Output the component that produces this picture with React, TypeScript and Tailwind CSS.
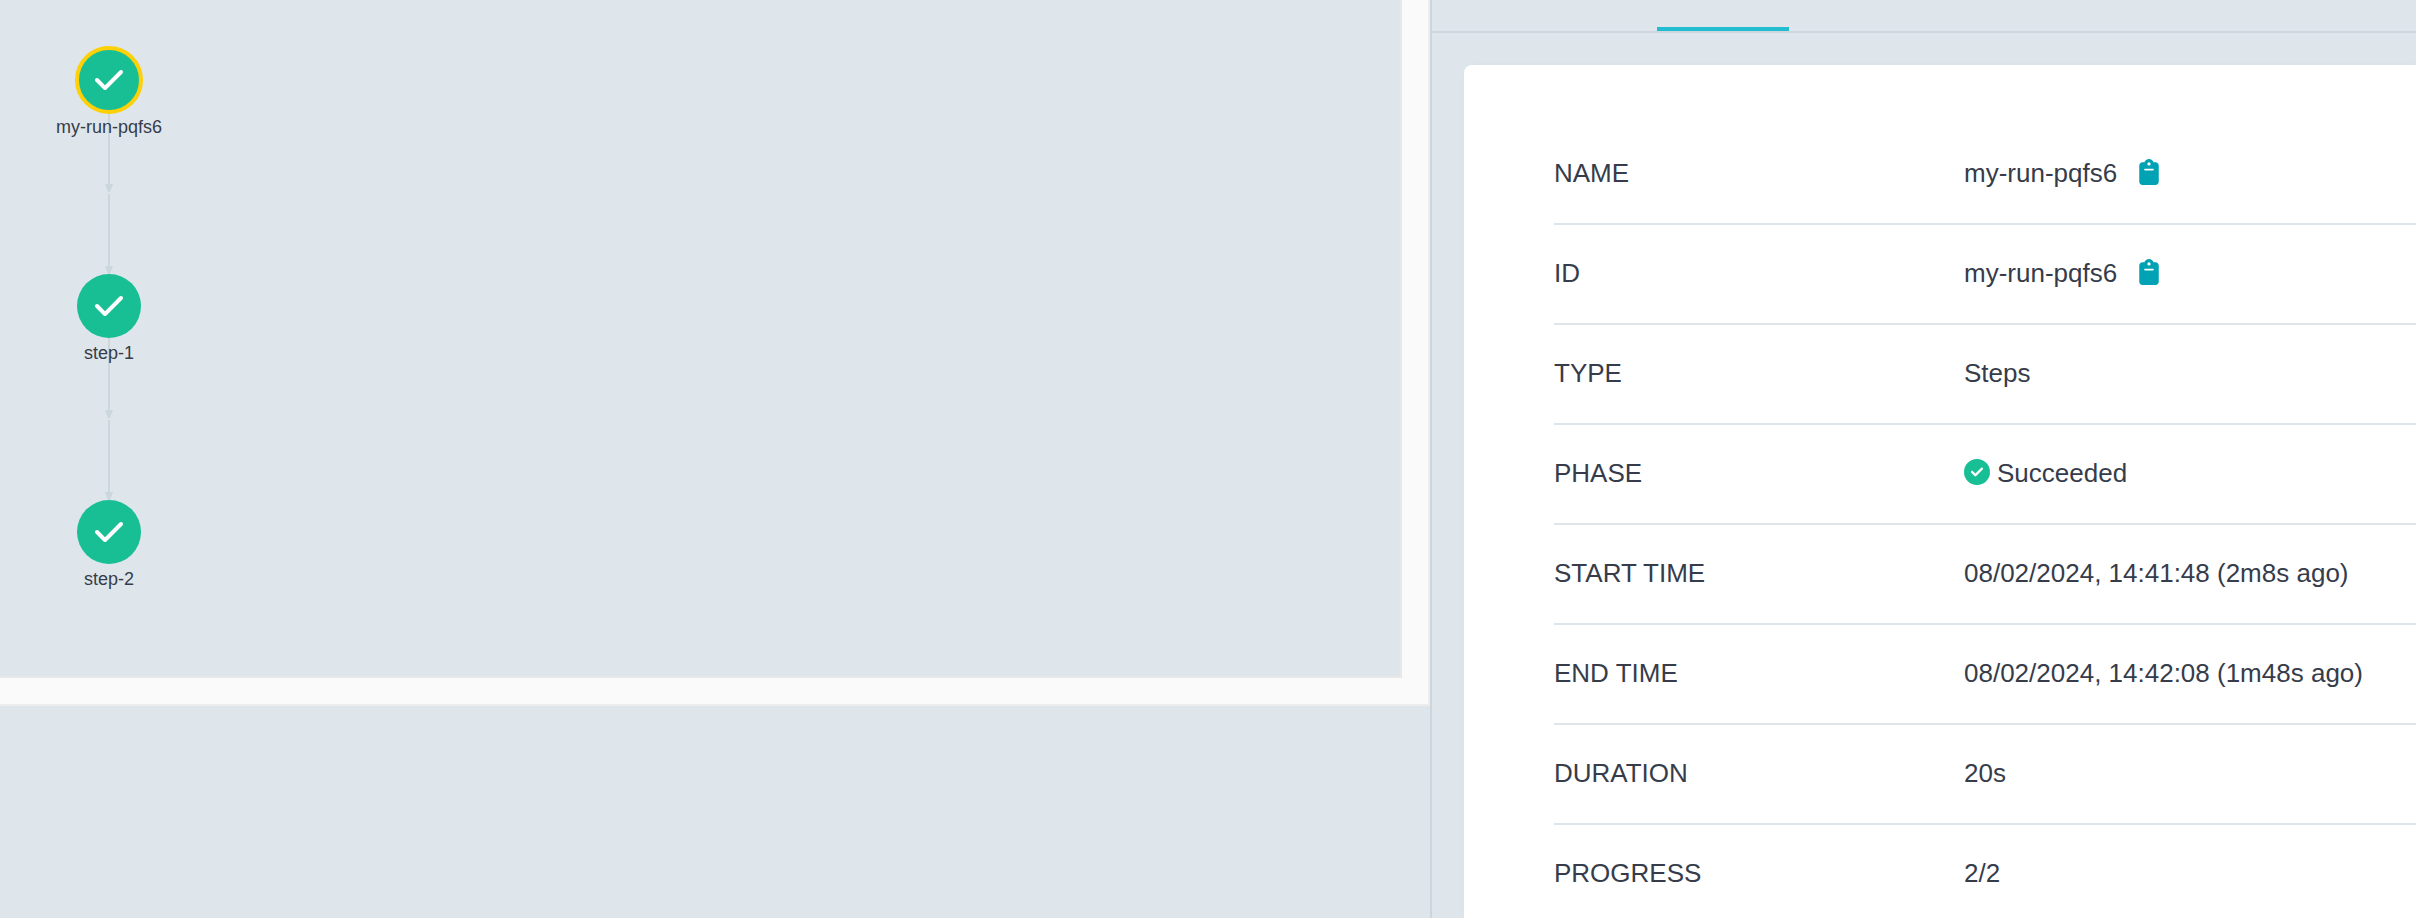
import React from "react";
import { FaCheck, FaCircleCheck, FaClipboard } from "react-icons/fa6";

type Row = { label: string; value: string; copy?: boolean; ok?: boolean };

const rows: Row[] = [
  { label: "NAME", value: "my-run-pqfs6", copy: true },
  { label: "ID", value: "my-run-pqfs6", copy: true },
  { label: "TYPE", value: "Steps" },
  { label: "PHASE", value: "Succeeded", ok: true },
  { label: "START TIME", value: "08/02/2024, 14:41:48 (2m8s ago)" },
  { label: "END TIME", value: "08/02/2024, 14:42:08 (1m48s ago)" },
  { label: "DURATION", value: "20s" },
  { label: "PROGRESS", value: "2/2" },
];

function Edges() {
  return (
    <svg className="absolute left-0 top-0 h-[676px] w-[220px]" viewBox="0 0 220 676" fill="#ccd6dd">
      <path d="M108 112h2v80h-2z" />
      <path d="M105 184h8l-3 8h-2z" />
      <path d="M108 194h2v80h-2z" />
      <path d="M105 266h8l-3 8h-2z" />
      <path d="M108 338h2v80h-2z" />
      <path d="M105 410h8l-3 8h-2z" />
      <path d="M108 420h2v80h-2z" />
      <path d="M105 492h8l-3 8h-2z" />
    </svg>
  );
}

function Node({ label, place, selected }: { label: string; place: string; selected?: boolean }) {
  return (
    <div className={`absolute left-[9px] flex w-[200px] flex-col items-center ${place}`}>
      <div
        className={`flex size-16 items-center justify-center rounded-full bg-[#18be94] ${
          selected ? "outline-[4px] -outline-offset-2 outline-[#fdd007]" : ""
        }`}
      >
        <FaCheck className="size-8 text-white" />
      </div>
      <span className="mt-[5px] text-[18px] leading-[20px]">{label}</span>
    </div>
  );
}

export default function App() {
  return (
    <div className="flex h-[918px] w-[2416px] overflow-hidden bg-[#dee6eb] font-['Liberation_Sans',Arial,sans-serif] text-[#363c4a]">
      <div className="h-[706px] w-[1430px] shrink-0 border-b-2 border-r-2 border-[#ededed] bg-[#fafafa]">
        <div className="relative h-[678px] w-[1402px] border-b-2 border-r-2 border-[#e8e8e8] bg-[#dee6eb]">
          <Edges />
          <Node label="my-run-pqfs6" place="top-[48px]" selected />
          <Node label="step-1" place="top-[274px]" />
          <Node label="step-2" place="top-[500px]" />
        </div>
      </div>
      <div className="flex min-w-0 flex-1 flex-col border-l-2 border-[#ccd6dd]">
        <div className="flex h-[33px] shrink-0 items-end border-b-2 border-[#ccd6dd] pl-[225px]">
          <div className="h-1 w-[132px] bg-[#23bdd2]" />
        </div>
        <div className="ml-8 mt-8 flex-1 rounded-tl-lg bg-white pl-[90px] pt-[60px] shadow-[2px_2px_6px_rgba(200,215,215,0.6)]">
          {rows.map((r) => (
            <div key={r.label} className="flex h-[100px] items-center border-b-2 border-[#dee6eb] pb-[2px] text-[26px] leading-[30px]">
              <div className="w-[410px]">{r.label}</div>
              <div className="flex items-center whitespace-nowrap">
                {r.ok && <FaCircleCheck className="-mt-[2px] mr-[7px] size-[26px] text-[#18be94]" />}
                <span>{r.value}</span>
                {r.copy && <FaClipboard className="-mt-[2px] ml-[19px] size-[26px] text-[#00a2b3]" />}
              </div>
            </div>
          ))}
        </div>
      </div>
    </div>
  );
}
